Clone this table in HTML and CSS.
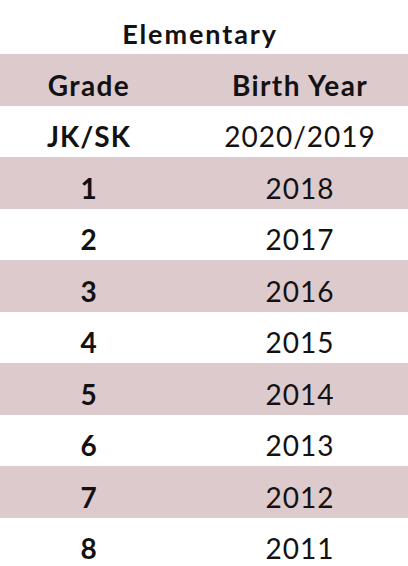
FILE: index.html
```html
<!DOCTYPE html>
<html>
<head>
<meta charset="utf-8">
<link rel="stylesheet" href="styles.css">
</head>
<body>
<div class="sheet">
  <div class="title">Elementary</div>
  <div class="table">
    <div class="row shaded head"><div class="c1">Grade</div><div class="c2">Birth Year</div></div>
    <div class="row"><div class="c1">JK/SK</div><div class="c2">2020/2019</div></div>
    <div class="row shaded"><div class="c1">1</div><div class="c2">2018</div></div>
    <div class="row"><div class="c1">2</div><div class="c2">2017</div></div>
    <div class="row shaded"><div class="c1">3</div><div class="c2">2016</div></div>
    <div class="row"><div class="c1">4</div><div class="c2">2015</div></div>
    <div class="row shaded"><div class="c1">5</div><div class="c2">2014</div></div>
    <div class="row"><div class="c1">6</div><div class="c2">2013</div></div>
    <div class="row shaded"><div class="c1">7</div><div class="c2">2012</div></div>
    <div class="row"><div class="c1">8</div><div class="c2">2011</div></div>
  </div>
</div>
</body>
</html>
```
FILE: styles.css
```css
html, body {
  margin: 0;
  padding: 0;
  background: #ffffff;
}
body {
  width: 408px;
  height: 566px;
  overflow: hidden;
  font-family: "Lato", "Liberation Sans", sans-serif;
  color: #141112;
}
.sheet {
  display: flex;
  flex-direction: column;
}
.title {
  height: 54px;
  box-sizing: border-box;
  display: flex;
  align-items: flex-end;
  justify-content: center;
  padding-right: 8px;
  padding-bottom: 7px;
  font-size: 27px;
  line-height: 1;
  font-weight: 700;
  letter-spacing: 1.9px;
}
.table {
  display: flex;
  flex-direction: column;
}
.row {
  height: 51.5px;
  box-sizing: border-box;
  display: grid;
  grid-template-columns: 178px 1fr;
  align-items: end;
  padding-bottom: 7px;
  font-size: 28px;
  line-height: 1;
  letter-spacing: 1px;
}
.row.shaded {
  background: #dccacd;
}
.c1 {
  text-align: center;
  font-weight: 700;
}
.c2 {
  text-align: center;
  padding-left: 14px;
  font-weight: 400;
}
.head {
  letter-spacing: 1.4px;
}
.head .c2 {
  font-weight: 700;
}
```
